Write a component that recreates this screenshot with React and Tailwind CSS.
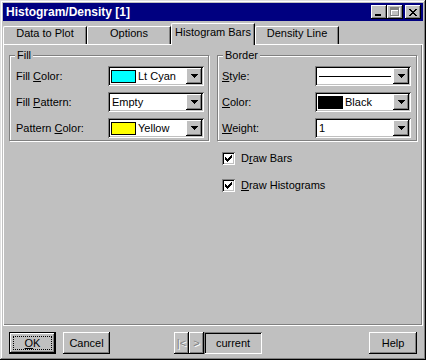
import React from 'react';

const raised = 'shadow-[inset_-1px_-1px_#000,inset_1px_1px_#fff,inset_-2px_-2px_#808080]';
const sunken = 'shadow-[inset_1px_1px_#808080,inset_-1px_-1px_#fff,inset_2px_2px_#000,inset_-2px_-2px_#c0c0c0]';

const tabs = ['Data to Plot', 'Options', 'Histogram Bars', 'Density Line'];

function ArrowButton() {
  return (
    <div className={`w-[16px] h-[16px] shrink-0 bg-[#c0c0c0] ${raised} flex items-center justify-center`}>
      <svg width="7" height="4" viewBox="0 0 7 4" shapeRendering="crispEdges">
        <path d="M0 0h7v1h-1v1h-1v1h-1v1h-1v-1h-1v-1h-1v-1h-1z" fill="#000" />
      </svg>
    </div>
  );
}

function Combo({ children }) {
  return (
    <div className={`w-[96px] h-[20px] bg-white ${sunken} p-[2px] flex items-center`}>
      <div className="flex-1 min-w-0 h-full flex items-center pl-[2px]">{children}</div>
      <ArrowButton />
    </div>
  );
}

function Swatch({ color }) {
  return <div className={`w-[25px] h-[13px] border border-black mr-[2px] -ml-[1px] ${color}`} />;
}

function Group({ title, className, children }) {
  return (
    <div className={`relative w-[200px] h-[86px] border border-[#808080] shadow-[1px_1px_0_#fff,inset_1px_1px_0_#fff] ${className}`}>
      <span className="absolute -top-[7px] left-[5px] px-[2px] bg-[#c0c0c0] leading-[13px]">{title}</span>
      {children}
    </div>
  );
}

function Check({ children }) {
  return (
    <div className="flex items-center h-[13px] gap-[6px]">
      <div className={`w-[13px] h-[13px] bg-white ${sunken} flex items-center justify-center`}>
        <svg width="7" height="7" viewBox="0 0 7 7" shapeRendering="crispEdges">
          <path d="M6 0h1v3h-1v1h-1v1h-1v1h-1v1h-1v-1h-1v-1h-1v-3h1v1h1v1h1v-1h1v-1h1z" fill="#000" />
        </svg>
      </div>
      <span>{children}</span>
    </div>
  );
}

function Button({ children, className = '' }) {
  return (
    <div className={`h-[22px] bg-[#c0c0c0] ${raised} flex items-center justify-center ${className}`}>
      {children}
    </div>
  );
}

export default function App() {
  return (
    <div className="w-[426px] h-[360px] p-[3px] bg-[#c0c0c0] flex flex-col font-['Liberation_Sans',Arial,sans-serif] text-[11px] leading-[13px] text-black shadow-[inset_-1px_-1px_#000,inset_1px_1px_#dfdfdf,inset_-2px_-2px_#808080,inset_2px_2px_#fff]">
      {/* title bar */}
      <div className="h-[18px] bg-[#000080] flex items-center pl-[3px] pr-[2px]">
        <span className="text-white font-bold text-[12px] leading-none">Histogram/Density [1]</span>
        <div className="ml-auto flex">
          <div className={`w-[16px] h-[14px] bg-[#c0c0c0] ${raised} flex items-end pl-[4px] pb-[3px]`}>
            <div className="w-[6px] h-[2px] bg-black" />
          </div>
          <div className={`w-[16px] h-[14px] bg-[#c0c0c0] ${raised} flex items-center justify-center`}>
            <svg width="10" height="10" viewBox="0 0 10 10" shapeRendering="crispEdges">
              <path d="M1 1h9v9h-9z M2 4v5h7v-5z" fill="#fff" fillRule="evenodd" />
              <path d="M0 0h9v9h-9z M1 3v5h7v-5z" fill="#808080" fillRule="evenodd" />
            </svg>
          </div>
          <div className={`ml-[2px] w-[16px] h-[14px] bg-[#c0c0c0] ${raised} flex items-center justify-center`}>
            <svg width="8" height="7" viewBox="0 0 8 7" shapeRendering="crispEdges">
              <path d="M0 0h2v1h-2z M6 0h2v1h-2z M1 1h2v1h-2z M5 1h2v1h-2z M2 2h4v1h-4z M3 3h2v1h-2z M2 4h4v1h-4z M1 5h2v1h-2z M5 5h2v1h-2z M0 6h2v1h-2z M6 6h2v1h-2z" fill="#000" />
            </svg>
          </div>
        </div>
      </div>

      {/* tabs */}
      <div className="flex items-end h-[21px] mt-[2px]">
        {tabs.map((t) =>
          t === 'Histogram Bars' ? (
            <div key={t} className="relative z-10 w-[84px] h-[22px] -mb-[1px] bg-[#c0c0c0] border-l border-t border-r border-l-white border-t-white border-r-black rounded-tl-[2px] shadow-[inset_-1px_0_#808080] pt-[2px] text-center">
              {t}
            </div>
          ) : (
            <div key={t} className="w-[84px] h-[18px] bg-[#c0c0c0] border-l border-t border-r border-l-white border-t-white border-r-black rounded-tl-[2px] shadow-[inset_-1px_0_#808080] text-center">
              {t}
            </div>
          )
        )}
      </div>

      {/* tab panel */}
      <div className="h-[282px] border border-white shadow-[inset_-1px_-1px_#808080] pl-[5px] pt-[10px] flex gap-[8px]">
        <Group title="Fill" className="pl-[6px] pt-[10px] flex flex-col gap-[6px]">
          <div className="flex items-center h-[20px]">
            <span className="w-[92px]">Fill <span className="underline">C</span>olor:</span>
            <Combo>
              <Swatch color="bg-[#00ffff]" />
              <span>Lt Cyan</span>
            </Combo>
          </div>
          <div className="flex items-center h-[20px]">
            <span className="w-[92px]">Fill <span className="underline">P</span>attern:</span>
            <Combo>
              <span>Empty</span>
            </Combo>
          </div>
          <div className="flex items-center h-[20px]">
            <span className="w-[92px]">Pattern <span className="underline">C</span>olor:</span>
            <Combo>
              <Swatch color="bg-[#ffff00]" />
              <span>Yellow</span>
            </Combo>
          </div>
        </Group>

        <div className="flex flex-col">
          <Group title="Border" className="pl-[4px] pt-[10px] flex flex-col gap-[6px]">
            <div className="flex items-center h-[20px]">
              <span className="w-[93px]"><span className="underline">S</span>tyle:</span>
              <Combo>
                <div className="w-[72px] h-[1px] bg-black" />
              </Combo>
            </div>
            <div className="flex items-center h-[20px]">
              <span className="w-[93px]"><span className="underline">C</span>olor:</span>
              <Combo>
                <Swatch color="bg-black" />
                <span>Black</span>
              </Combo>
            </div>
            <div className="flex items-center h-[20px]">
              <span className="w-[93px]"><span className="underline">W</span>eight:</span>
              <Combo>
                <span>1</span>
              </Combo>
            </div>
          </Group>
          <div className="mt-[11px] pl-[5px] flex flex-col gap-[14px]">
            <Check>D<span className="underline">r</span>aw Bars</Check>
            <Check><span className="underline">D</span>raw Histograms</Check>
          </div>
        </div>
      </div>

      {/* bottom buttons */}
      <div className="flex items-start pt-[6px] pl-[6px] pr-[6px]">
        <div className="w-[47px] h-[22px] border border-black">
          <div className={`h-full bg-[#c0c0c0] ${raised} p-[3px]`}>
            <div className="h-full border border-dotted border-black flex items-center justify-center">
              <span><span className="underline">O</span>K</span>
            </div>
          </div>
        </div>
        <Button className="w-[47px] ml-[7px]">Cancel</Button>
        <div className="flex ml-[64px]">
          <Button className="w-[15px] text-[#808080] [text-shadow:1px_1px_0_#fff]">|&lt;</Button>
          <Button className="w-[15px] text-[#808080] [text-shadow:1px_1px_0_#fff]">&gt;</Button>
          <div className={`w-[58px] h-[22px] ${sunken} flex items-center justify-center`}>current</div>
        </div>
        <Button className="w-[48px] ml-auto">Help</Button>
      </div>
    </div>
  );
}
